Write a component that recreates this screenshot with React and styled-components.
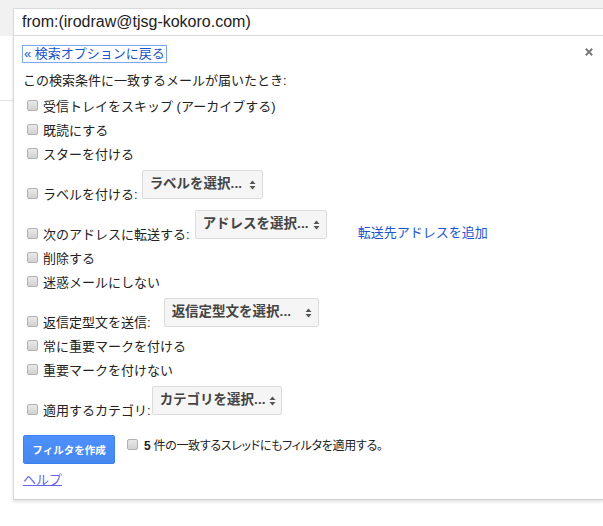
import React from "react";
import styled, { createGlobalStyle } from "styled-components";

const GlobalStyle = createGlobalStyle`
  html, body { margin: 0; padding: 0; background: #fff; }
  body {
    font-family: "Liberation Sans", Arial, "Noto Sans CJK JP", sans-serif;
    font-size: 13px;
    color: #222;
    overflow: hidden;
  }
`;

const Page = styled.div`
  width: 603px;
  height: 526px;
  overflow: hidden;
  background: #fff;
`;

const TopBar = styled.div`
  background: #f1f1f1;
  padding: 8px 0 0 13px;
`;

const SearchBox = styled.div`
  height: 28px;
  box-sizing: border-box;
  background: #fff;
  border: 1px solid #d9d9d9;
  border-right: none;
  padding-left: 8px;
  display: flex;
  align-items: center;
  font-size: 16px;
  color: #222;
`;

const Body = styled.div`
  padding-left: 13px;
  background: linear-gradient(#e3e3e3, #e3e3e3) no-repeat 0 64px / 13px 1px;
`;

const Panel = styled.section`
  background: #fff;
  border-left: 1px solid #d6d6d6;
  border-bottom: 1px solid #d0d0d0;
  box-shadow: 0 2px 3px rgba(0, 0, 0, 0.12);
  padding: 9px 10px 10px 9px;
`;

const BackRow = styled.div`
  display: flex;
  justify-content: space-between;
  align-items: center;
  height: 18px;
`;

const BackLink = styled.a`
  display: inline-block;
  line-height: 16px;
  padding: 0 1px;
  color: #1a55cc;
  text-decoration: none;
  outline: 1px solid #7ba8ee;
  box-shadow: 0 0 2px rgba(90, 150, 240, 0.6);
  cursor: pointer;
`;

const CloseIcon = styled.svg`
  align-self: flex-start;
  margin-top: 3px;
  width: 8px;
  height: 8px;
`;

const Heading = styled.div`
  margin-top: 6px;
  line-height: 24px;
`;

const Actions = styled.div`
  padding-left: 4px;
`;

const Row = styled.div`
  display: flex;
  align-items: flex-end;
  height: ${(p) => (p.$withSelect ? 40 : 24)}px;
`;

const Label = styled.label`
  display: flex;
  align-items: center;
  height: 24px;
  white-space: nowrap;
`;

const Check = styled.input.attrs({ type: "checkbox" })`
  appearance: none;
  -webkit-appearance: none;
  margin: 0 5px 0 0;
  width: 11px;
  height: 11px;
  box-sizing: border-box;
  border: 1px solid #b0b0b0;
  border-radius: 2px;
  background: linear-gradient(#e9e9e9, #d2d2d2);
  flex: none;
`;

const Select = styled.div`
  width: ${(p) => p.$width}px;
  margin-left: ${(p) => p.$offset}px;
  margin-bottom: 6px;
  height: 29px;
  box-sizing: border-box;
  border: 1px solid #dcdcdc;
  border-radius: 2px;
  background: #f5f5f5;
  display: flex;
  align-items: center;
  justify-content: space-between;
  padding: 0 6px 0 7px;
  font-weight: bold;
  font-size: 13.5px;
  color: #444;
  white-space: nowrap;
`;

const SelectText = styled.span`
  padding-bottom: 5px;
`;

const Arrows = styled.svg`
  width: 7px;
  height: 10px;
  margin-left: 4px;
  flex: none;
`;

const SideLink = styled.a`
  margin-left: 31px;
  line-height: 24px;
  color: #1a55cc;
  text-decoration: none;
  white-space: nowrap;
`;

const Footer = styled.div`
  display: flex;
  align-items: flex-start;
  margin-top: 14px;
`;

const CreateButton = styled.button`
  width: 92px;
  height: 29px;
  box-sizing: border-box;
  padding: 0;
  margin-right: 12px;
  background: linear-gradient(#4d90fe, #4787ed);
  border: 1px solid #3c82f0;
  border-radius: 2px;
  color: #fff;
  font-family: "Liberation Sans", Arial, "Noto Sans CJK JP", sans-serif;
  font-weight: bold;
  font-size: 10.5px;
`;

const ApplyLabel = styled.label`
  display: flex;
  align-items: flex-start;
  margin-top: 2px;
  line-height: 18px;
  font-size: 12px;
  letter-spacing: -0.3px;
  font-feature-settings: "palt";
  white-space: nowrap;
  & > input {
    margin-top: 2px;
    margin-right: 6px;
  }
`;

const Help = styled.a`
  display: inline-block;
  margin-top: 7px;
  line-height: 18px;
  color: #6262ee;
  text-decoration: underline;
`;

const actions = [
  { label: "受信トレイをスキップ (アーカイブする)" },
  { label: "既読にする" },
  { label: "スターを付ける" },
  { label: "ラベルを付ける:", select: "ラベルを選択...", width: 121, offset: 4 },
  {
    label: "次のアドレスに転送する:",
    select: "アドレスを選択...",
    width: 132,
    offset: 5,
    link: "転送先アドレスを追加",
  },
  { label: "削除する" },
  { label: "迷惑メールにしない" },
  { label: "返信定型文を送信:", select: "返信定型文を選択...", width: 155, offset: 13 },
  { label: "常に重要マークを付ける" },
  { label: "重要マークを付けない" },
  { label: "適用するカテゴリ:", select: "カテゴリを選択...", width: 130, offset: 1 },
];

function UpDown() {
  return (
    <Arrows viewBox="0 0 7 10">
      <path d="M3.5 0.5 L6.5 4 L0.5 4 Z" fill="#555" />
      <path d="M0.5 6 L6.5 6 L3.5 9.5 Z" fill="#555" />
    </Arrows>
  );
}

export default function App() {
  return (
    <Page>
      <GlobalStyle />
      <TopBar>
        <SearchBox>from:(irodraw@tjsg-kokoro.com)</SearchBox>
      </TopBar>
      <Body>
        <Panel>
          <BackRow>
            <BackLink>« 検索オプションに戻る</BackLink>
            <CloseIcon viewBox="0 0 8 8">
              <path d="M0.8 0.8 L7.2 7.2 M7.2 0.8 L0.8 7.2" stroke="#7a7a7a" strokeWidth="2" />
            </CloseIcon>
          </BackRow>
          <Heading>この検索条件に一致するメールが届いたとき:</Heading>
          <Actions>
            {actions.map((a) => (
              <Row key={a.label} $withSelect={!!a.select}>
                <Label>
                  <Check />
                  {a.label}
                </Label>
                {a.select && (
                  <Select $width={a.width} $offset={a.offset}>
                    <SelectText>{a.select}</SelectText>
                    <UpDown />
                  </Select>
                )}
                {a.link && <SideLink>{a.link}</SideLink>}
              </Row>
            ))}
          </Actions>
          <Footer>
            <CreateButton>フィルタを作成</CreateButton>
            <ApplyLabel>
              <Check />
              <span>
                <b>5</b> 件の一致するスレッドにもフィルタを適用する。
              </span>
            </ApplyLabel>
          </Footer>
          <Help>ヘルプ</Help>
        </Panel>
      </Body>
    </Page>
  );
}
